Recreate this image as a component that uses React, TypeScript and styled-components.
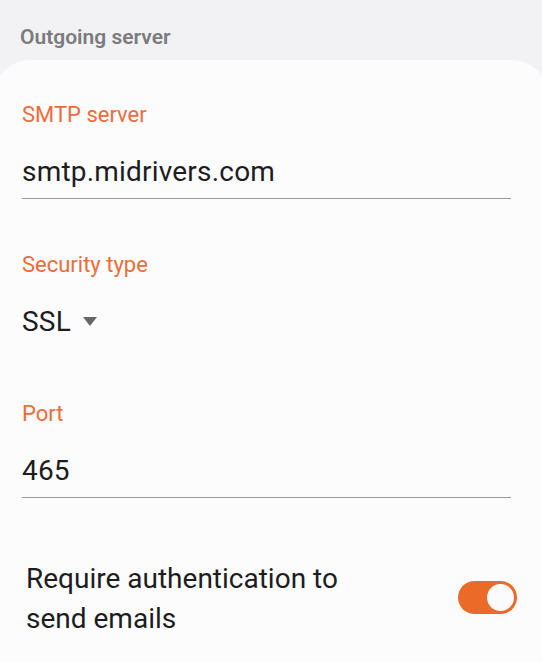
import styled, { createGlobalStyle } from "styled-components";

const GlobalStyle = createGlobalStyle`
  html, body {
    margin: 0;
    padding: 0;
    background: #f2f2f4;
    font-family: Roboto, "Noto Sans", sans-serif;
    overflow: hidden;
  }
`;

const Screen = styled.div`
  width: 542px;
  height: 662px;
  display: flex;
  flex-direction: column;
  overflow: hidden;
`;

const SectionTitle = styled.div`
  padding: 25px 0 11px 20px;
  font-size: 21px;
  line-height: 24px;
  font-weight: 600;
  color: #7b7b7d;
`;

const Card = styled.div`
  flex: 1;
  margin: 0 -6px;
  padding: 41px 37px 0 28px;
  background: #fcfcfc;
  border-radius: 36px 36px 0 0;
  display: flex;
  flex-direction: column;
`;

const Field = styled.div<{ $gap: number }>`
  display: flex;
  flex-direction: column;
  margin-top: ${(p) => p.$gap}px;
`;

const Label = styled.div`
  font-size: 22px;
  line-height: 28px;
  color: #ef6b3b;
`;

const Value = styled.div<{ $underline?: boolean; $top?: number }>`
  margin-top: ${(p) => p.$top ?? 25}px;
  font-size: 28px;
  line-height: 36px;
  letter-spacing: 0.2px;
  color: #1d1d1f;
  padding-bottom: ${(p) => (p.$underline ? "8px" : "0")};
  border-bottom: ${(p) => (p.$underline ? "1.5px solid #9a9a9a" : "none")};
  display: flex;
  align-items: center;
  gap: 12px;
`;

const Caret = styled.span`
  width: 0;
  height: 0;
  border-left: 7px solid transparent;
  border-right: 7px solid transparent;
  border-top: 9px solid #666;
  margin-top: -2px;
`;

const SwitchRow = styled.div`
  margin-top: 61px;
  padding-left: 4px;
  display: flex;
  align-items: center;
  justify-content: space-between;
`;

const SwitchText = styled.div`
  max-width: 350px;
  font-size: 28px;
  line-height: 40px;
  color: #1d1d1f;
`;

const Toggle = styled.div<{ $on: boolean }>`
  width: 59px;
  height: 33px;
  border-radius: 17px;
  background: ${(p) => (p.$on ? "#ec6a28" : "#c8c8c8")};
  display: flex;
  align-items: center;
  justify-content: ${(p) => (p.$on ? "flex-end" : "flex-start")};
  padding: 0 3px;
  box-sizing: border-box;
  margin-right: -6px;
  margin-top: -4px;
`;

const Knob = styled.div`
  width: 27px;
  height: 27px;
  border-radius: 50%;
  background: #fbfbfd;
`;

export default function App() {
  return (
    <Screen>
      <GlobalStyle />
      <SectionTitle>Outgoing server</SectionTitle>
      <Card>
        <Field $gap={0}>
          <Label>SMTP server</Label>
          <Value $underline>smtp.midrivers.com</Value>
        </Field>
        <Field $gap={52}>
          <Label>Security type</Label>
          <Value $top={25}>
            SSL
            <Caret />
          </Value>
        </Field>
        <Field $gap={60}>
          <Label>Port</Label>
          <Value $underline>465</Value>
        </Field>
        <SwitchRow>
          <SwitchText>Require authentication to send emails</SwitchText>
          <Toggle $on>
            <Knob />
          </Toggle>
        </SwitchRow>
      </Card>
    </Screen>
  );
}
